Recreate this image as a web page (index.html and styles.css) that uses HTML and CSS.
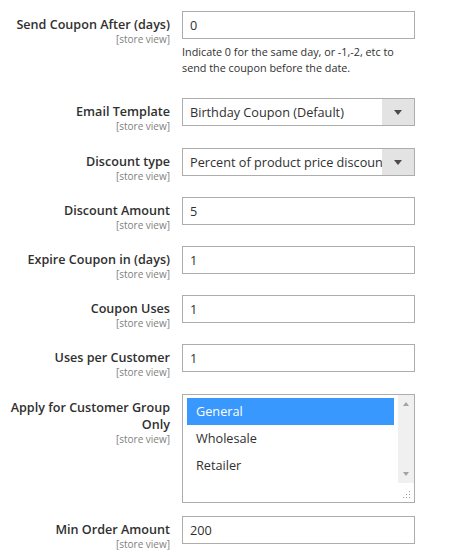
FILE: index.html
```html
<!DOCTYPE html>
<html lang="en">
<head>
  <meta charset="UTF-8">
  <meta name="viewport" content="width=device-width, initial-scale=1.0">
  <title>Birthday Coupon</title>
  <link rel="stylesheet" href="styles.css">
</head>
<body>
  <div class="fieldset">
    <div class="field field-note">
      <div class="label">
        <span class="title">Send Coupon After (days)</span>
        <span class="scope">[store view]</span>
      </div>
      <div class="control">
        <div class="input">0</div>
        <p class="note">Indicate 0 for the same day, or -1,-2, etc to send the coupon before the date.</p>
      </div>
    </div>

    <div class="field field-wide">
      <div class="label">
        <span class="title">Email Template</span>
        <span class="scope">[store view]</span>
      </div>
      <div class="control">
        <div class="select">
          <span class="value">Birthday Coupon (Default)</span>
          <span class="arrow"></span>
        </div>
      </div>
    </div>

    <div class="field">
      <div class="label">
        <span class="title">Discount type</span>
        <span class="scope">[store view]</span>
      </div>
      <div class="control">
        <div class="select">
          <span class="value">Percent of product price discount</span>
          <span class="arrow"></span>
        </div>
      </div>
    </div>

    <div class="field">
      <div class="label">
        <span class="title">Discount Amount</span>
        <span class="scope">[store view]</span>
      </div>
      <div class="control">
        <div class="input">5</div>
      </div>
    </div>

    <div class="field">
      <div class="label">
        <span class="title">Expire Coupon in (days)</span>
        <span class="scope">[store view]</span>
      </div>
      <div class="control">
        <div class="input">1</div>
      </div>
    </div>

    <div class="field">
      <div class="label">
        <span class="title">Coupon Uses</span>
        <span class="scope">[store view]</span>
      </div>
      <div class="control">
        <div class="input">1</div>
      </div>
    </div>

    <div class="field field-wide">
      <div class="label">
        <span class="title">Uses per Customer</span>
        <span class="scope">[store view]</span>
      </div>
      <div class="control">
        <div class="input">1</div>
      </div>
    </div>

    <div class="field field-multi">
      <div class="label">
        <span class="title">Apply for Customer Group Only</span>
        <span class="scope">[store view]</span>
      </div>
      <div class="control">
        <div class="multiselect">
          <ul class="options">
            <li class="selected">General</li>
            <li>Wholesale</li>
            <li>Retailer</li>
          </ul>
          <div class="scrollbar">
            <span class="step up"></span>
            <span class="step down"></span>
          </div>
          <svg class="grip" width="8" height="8" viewBox="0 0 8 8">
            <rect x="6" y="0" width="1" height="1" fill="#9a9a9a" />
            <rect x="3" y="3" width="1" height="1" fill="#9a9a9a" />
            <rect x="6" y="3" width="1" height="1" fill="#9a9a9a" />
            <rect x="0" y="6" width="1" height="1" fill="#9a9a9a" />
            <rect x="3" y="6" width="1" height="1" fill="#9a9a9a" />
            <rect x="6" y="6" width="1" height="1" fill="#9a9a9a" />
          </svg>
        </div>
      </div>
    </div>

    <div class="field">
      <div class="label">
        <span class="title">Min Order Amount</span>
        <span class="scope">[store view]</span>
      </div>
      <div class="control">
        <div class="input">200</div>
      </div>
    </div>
  </div>
</body>
</html>
```

FILE: styles.css
```css
body {
  margin: 0;
  background: #fff;
  font-family: "Open Sans", "Liberation Sans", sans-serif;
  color: #303030;
}

.fieldset {
  padding: 11px 0 0 8px;
}

/* label column + control column, rows spaced by the label block */
.field {
  display: flex;
  align-items: flex-start;
  gap: 12px;
  margin-bottom: 15px;
}
.field-wide {
  margin-bottom: 16px;
}
.field-note {
  margin-bottom: 22px;
}
.field-multi {
  margin-bottom: 13px;
}

.label {
  width: 162px;
  flex: none;
  display: flex;
  flex-direction: column;
  align-items: flex-end;
  text-align: right;
  padding-top: 5px;
}

.label .title {
  font-size: 12.6px;
  font-weight: 600;
  line-height: 17px;
}

.label .scope {
  font-size: 10px;
  line-height: 12px;
  color: #808080;
}

.control {
  width: 233px;
}

.input,
.select {
  box-sizing: border-box;
  height: 28px;
  border: 1px solid #adadad;
  font-size: 12.7px;
  line-height: 26px;
}

.input {
  padding: 0 7px;
}

.note {
  margin: 5px 0 0;
  font-size: 10.8px;
  line-height: 16px;
}

.select {
  display: flex;
}
.select .value {
  flex: 1;
  min-width: 0;
  overflow: hidden;
  white-space: nowrap;
  padding: 0 6px 0 7px;
}
.select .arrow {
  flex: none;
  width: 32px;
  background: #e3e3e3;
  display: flex;
  align-items: center;
  justify-content: center;
}
.select .arrow::after {
  content: "";
  border-left: 4px solid transparent;
  border-right: 4px solid transparent;
  border-top: 5px solid #514943;
}

.multiselect {
  position: relative;
  box-sizing: border-box;
  height: 109px;
  border: 1px solid #adadad;
  display: flex;
  padding: 3px 0 0 4px;
}

.options {
  list-style: none;
  margin: 0;
  padding: 0;
  flex: 1;
  font-size: 12.7px;
}
.options li {
  height: 26.5px;
  line-height: 26px;
  padding-left: 9px;
}
.options li.selected {
  height: 27px;
  background: #3898fd;
  color: #fff;
}

.scrollbar {
  width: 16px;
  height: 88px;
  margin: -3px 0 0 4px;
  background: #f0f0f0;
  position: relative;
}
.scrollbar .step {
  position: absolute;
  left: 5px;
  border-left: 3px solid transparent;
  border-right: 3px solid transparent;
}
.scrollbar .up {
  top: 7px;
  border-bottom: 4px solid #a3a3a3;
}
.scrollbar .down {
  bottom: 7px;
  border-top: 4px solid #a3a3a3;
}

.grip {
  position: absolute;
  right: 3px;
  bottom: 3px;
}
```
